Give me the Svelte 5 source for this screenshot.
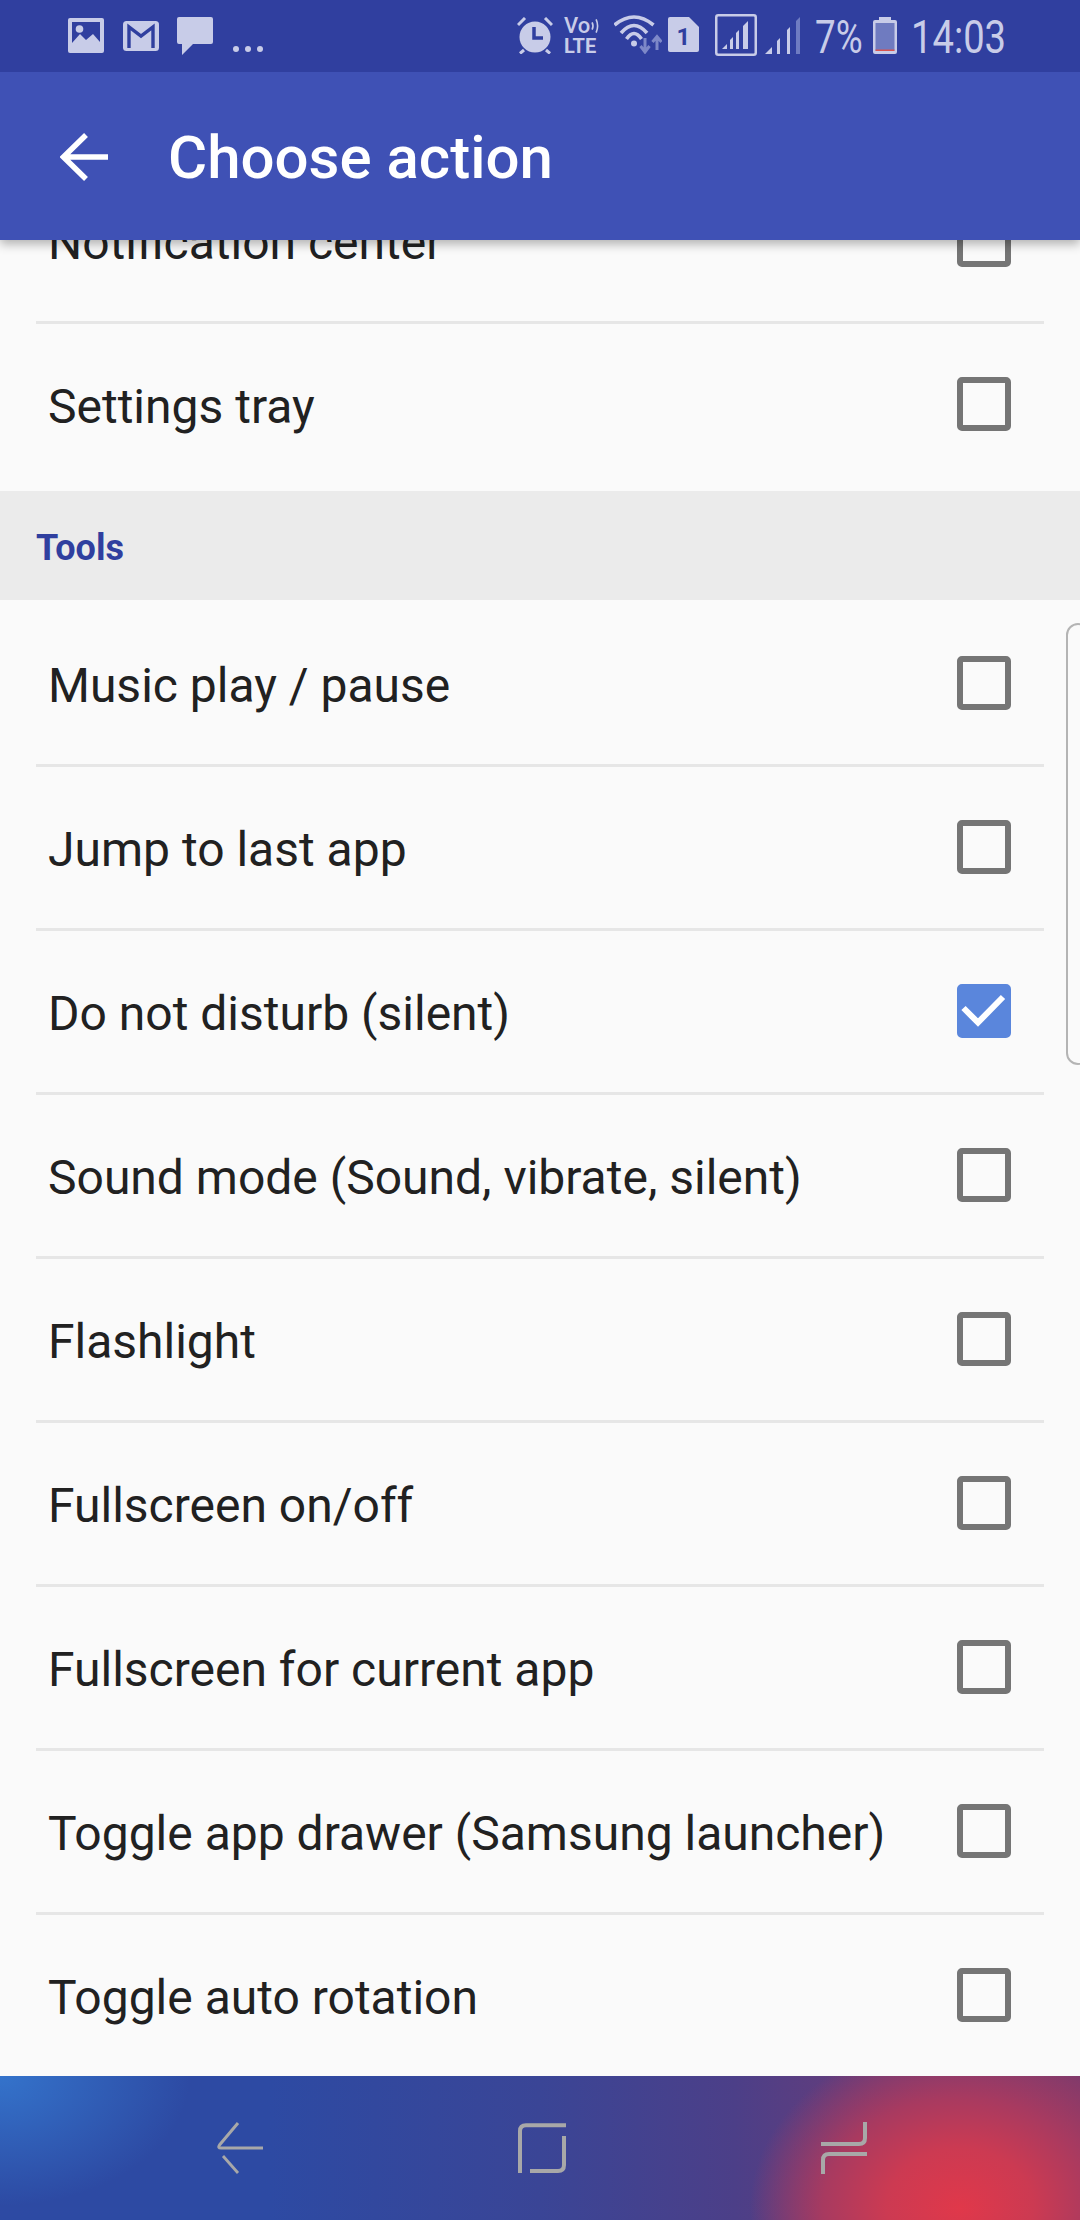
<script>
    const firstGroup = ["Notification center", "Settings tray"];
    const tools = [
        { label: "Music play / pause" },
        { label: "Jump to last app" },
        { label: "Do not disturb (silent)", checked: true },
        { label: "Sound mode (Sound, vibrate, silent)" },
        { label: "Flashlight" },
        { label: "Fullscreen on/off" },
        { label: "Fullscreen for current app" },
        { label: "Toggle app drawer (Samsung launcher)" },
        { label: "Toggle auto rotation" }
    ];
</script>

{#snippet row(label, checked)}
    <div class="row">
        <span class="row-label">{label}</span>
        <span class="check" class:checked>
            {#if checked}
                <svg viewBox="0 0 54 54" width="54" height="54" fill="none" stroke="#fff" stroke-width="6">
                    <path d="M6.5 24 L21 38.5 L46 13" />
                </svg>
            {/if}
        </span>
    </div>
{/snippet}

<div class="screen">
    <!-- STATUS BAR -->
    <div class="status">
        <div class="status-left">
            <svg class="ic-image" viewBox="0 0 36 35" width="36" height="35">
                <rect width="36" height="35" rx="2" fill="#c8cce8" />
                <path d="M4 4 H32 V24 L25 16 L18 22 L12 16 L4 25Z" fill="#303f9f" />
                <circle cx="11.5" cy="11" r="3.8" fill="#c8cce8" />
            </svg>
            <svg class="ic-mail" viewBox="0 0 36 30" width="36" height="30">
                <rect width="36" height="30" rx="3.5" fill="#c8cce8" />
                <path d="M6 27 V6 L18 15 L30 6 V27" fill="none" stroke="#303f9f" stroke-width="3.4" />
            </svg>
            <svg class="ic-chat" viewBox="0 0 36 38" width="36" height="38">
                <path d="M2 0 H34 Q36 0 36 2 V25 Q36 27 34 27 H16 L5 38 V27 H2 Q0 27 0 25 V2 Q0 0 2 0Z" fill="#c8cce8" />
            </svg>
            <span class="dots"><i></i><i></i><i></i></span>
        </div>

        <div class="status-right">
            <svg class="ic-alarm" viewBox="0 0 36 37" width="36" height="37" fill="#c8cce8">
                <circle cx="18" cy="20" r="15.5" />
                <path d="M1 8 L8 1 M35 8 L28 1 M7 33 L3 36.5 M29 33 L33 36.5" stroke="#c8cce8" stroke-width="3" />
                <path d="M17 10 V21 H26" fill="none" stroke="#303f9f" stroke-width="3.5" />
            </svg>
            <span class="volte">
                <span class="vo">Vo<svg viewBox="0 0 12 20" width="11" height="18" fill="none" stroke="#c8cce8" stroke-width="2.2"><path d="M1.5 5 Q4 10 1.5 15 M7 1 Q11 10 7 19" /></svg></span>
                <span class="lte">LTE</span>
            </span>
            <svg class="ic-wifi" viewBox="0 -2 48 39" width="48" height="39">
                <g fill="none" stroke="#c8cce8" stroke-width="3.6">
                    <path d="M0.5 8 Q20 -8 39.5 8" />
                    <path d="M7 16 Q20 1 33 16" />
                    <path d="M12.5 22 Q20 11 27.5 22" />
                </g>
                <circle cx="20" cy="26.5" r="3" fill="#c8cce8" />
                <path d="M31 21 V34 M26.5 29 L31 35 L35.5 29" fill="none" stroke="#7d88c8" stroke-width="3" />
                <path d="M43 33 V20 M38.5 25 L43 19.5 L47.5 25" fill="none" stroke="#7d88c8" stroke-width="3" />
            </svg>
            <svg class="ic-sim" viewBox="0 0 31 35" width="31" height="35">
                <path d="M2 0 H21 L31 10 V33 Q31 35 29 35 H2 Q0 35 0 33 V2 Q0 0 2 0Z" fill="#c8cce8" />
                <text x="15.5" y="28" class="sim-num">1</text>
            </svg>
            <svg class="ic-box" viewBox="0 0 42 42" width="42" height="42">
                <rect x="1.25" y="1.25" width="39.5" height="39.5" rx="2" fill="none" stroke="#c8cce8" stroke-width="2.5" />
                <g fill="#c8cce8">
                    <path d="M7 35 L12 30 V35Z" />
                    <path d="M15 35 V26 L18 23 V35Z" />
                    <path d="M21 35 V19 L24 16 V35Z" />
                    <path d="M28 35 V12 L33 7 V35Z" />
                </g>
            </svg>
            <svg class="ic-signal" viewBox="0 0 35 37" width="35" height="37">
                <g fill="#c8cce8">
                    <path d="M0 37 L7 30 V37Z" />
                    <path d="M12 37 V24 L15 21 V37Z" />
                    <path d="M22 37 V13 L25 10 V37Z" />
                </g>
                <path d="M31 37 V4 L35 0 V37Z" fill="#6f7cc2" />
            </svg>
            <span class="pct">7%</span>
            <svg class="ic-batt" viewBox="0 0 24 37" width="24" height="37">
                <path d="M6 0 H18 V3 H22 Q24 3 24 5 V35 Q24 37 22 37 H2 Q0 37 0 35 V5 Q0 3 2 3 H6Z" fill="#c8cce8" />
                <rect x="2.5" y="6" width="19" height="27.5" fill="#6f7bc0" />
                <rect x="2.5" y="32.5" width="19" height="1.5" fill="#d9534f" />
            </svg>
            <span class="time">14:03</span>
        </div>
    </div>

    <!-- TOOLBAR -->
    <header class="toolbar">
        <svg class="back" viewBox="0 0 48 48" width="48" height="48" fill="none" stroke="#fff" stroke-width="5.5">
            <path d="M48 24 H4 M26 2 L3.5 24 L26 46" />
        </svg>
        <h1>Choose action</h1>
    </header>

    <!-- LIST -->
    <main class="content">
        <div class="list">
            <div class="group first">
                {#each firstGroup as label}
                    {@render row(label, false)}
                {/each}
            </div>
            <div class="section">Tools</div>
            <div class="group tools">
                {#each tools as item}
                    {@render row(item.label, item.checked)}
                {/each}
            </div>
        </div>
        <div class="edge-handle"></div>
    </main>

    <!-- NAV BAR -->
    <nav class="nav">
        <svg viewBox="0 0 46 52" width="46" height="52" fill="none" stroke="#a8a8a8">
            <path d="M21 1 L2.5 23 Q0.5 26 4 26 H46" stroke-width="3" />
            <path d="M6 34 L21 51" stroke-width="2.8" />
        </svg>
        <svg viewBox="0 0 48 50" width="48" height="50" fill="none" stroke="#a8a8a8">
            <path d="M48 2.2 H8 Q2 2.2 2 8 V50" stroke-width="4" />
            <path d="M46 13 V42 Q46 48 40 48 H12" stroke-width="4" />
        </svg>
        <svg viewBox="0 0 46 52" width="46" height="52" fill="none" stroke="#a8a8a8">
            <path d="M44 0 V16 Q44 22 38 22 H0" stroke-width="4" />
            <path d="M46 32 H8 Q2 32 2 38 V52" stroke-width="4" />
        </svg>
    </nav>
</div>

<style>
    :global(body) {
        margin: 0;
        background: #fafafa;
    }

    .screen {
        width: 1080px;
        height: 2220px;
        display: flex;
        flex-direction: column;
        overflow: hidden;
        font-family: Roboto, sans-serif;
    }

    /* STATUS BAR */
    .status {
        height: 72px;
        flex: none;
        background: #303f9f;
        display: flex;
        justify-content: space-between;
        align-items: flex-start;
        padding: 0 75px 0 68px;
        box-sizing: border-box;
        color: #c8cce8;
        position: relative;
        z-index: 3;
    }
    .status-left,
    .status-right {
        display: flex;
        align-items: flex-start;
    }
    .ic-image {
        margin-top: 18px;
    }
    .ic-mail {
        margin: 21px 0 0 19px;
    }
    .ic-chat {
        margin: 17px 0 0 18px;
    }
    .dots {
        display: flex;
        gap: 6px;
        margin: 46px 0 0 20px;
    }
    .dots i {
        width: 6px;
        height: 6px;
        border-radius: 50%;
        background: #c8cce8;
    }
    .ic-alarm {
        margin-top: 17px;
    }
    .volte {
        display: flex;
        flex-direction: column;
        width: 36px;
        margin: 15px 0 0 11px;
        line-height: 1;
    }
    .vo {
        display: flex;
        align-items: center;
        font-size: 22px;
        font-weight: 500;
        height: 21px;
        gap: 1px;
    }
    .lte {
        font-size: 20px;
        font-weight: 700;
    }
    .ic-wifi {
        margin: 15px 0 0 14px;
    }
    .ic-sim {
        margin: 17px 0 0 6px;
    }
    .sim-num {
        font-size: 24px;
        font-weight: 700;
        fill: #303f9f;
        text-anchor: middle;
    }
    .ic-box {
        margin: 14px 0 0 16px;
    }
    .ic-signal {
        margin: 17px 0 0 8px;
    }
    .pct {
        width: 47px;
        margin-left: 15px;
        font-size: 46px;
        line-height: 74px;
        white-space: nowrap;
        transform: scaleX(0.8);
        transform-origin: left;
    }
    .ic-batt {
        margin: 17px 0 0 11px;
    }
    .time {
        width: 94px;
        margin-left: 14px;
        font-size: 46px;
        line-height: 74px;
        white-space: nowrap;
        transform: scaleX(0.83);
        transform-origin: left;
    }

    /* TOOLBAR */
    .toolbar {
        height: 168px;
        flex: none;
        background: #3f51b5;
        display: flex;
        align-items: center;
        padding-left: 60px;
        box-sizing: border-box;
        position: relative;
        z-index: 2;
        box-shadow: 0 4px 10px rgba(0, 0, 0, 0.3);
    }
    .toolbar .back {
        margin-top: 1px;
    }
    .toolbar h1 {
        margin: 3px 0 0 60px;
        color: #fff;
        font-size: 60px;
        font-weight: 500;
    }

    /* LIST */
    .content {
        flex: 1;
        min-height: 0;
        position: relative;
        background: #fafafa;
        overflow: hidden;
    }
    .list {
        margin-top: -80px;
    }
    .group.first {
        padding-bottom: 6px;
    }
    .group.tools {
        padding-top: 3px;
    }
    .section {
        height: 109px;
        box-sizing: border-box;
        background: #ebebeb;
        padding: 4px 0 0 36px;
        display: flex;
        align-items: center;
        color: #303f9f;
        font-size: 36px;
        font-weight: 700;
    }
    .row {
        height: 161px;
        margin: 0 36px;
        padding: 0 33px 0 12px;
        display: flex;
        justify-content: space-between;
        align-items: center;
    }
    .row + .row {
        border-top: 3px solid #e6e6e6;
    }
    .row-label {
        padding-top: 4px;
        font-size: 48px;
        color: #212121;
    }
    .check {
        width: 54px;
        height: 54px;
        box-sizing: border-box;
        border: 6px solid #757575;
        border-radius: 5px;
        position: relative;
        margin-top: -1px;
    }
    .check.checked {
        background: #5a86dc;
        border-color: #5a86dc;
    }
    .check svg {
        position: absolute;
        left: -6px;
        top: -6px;
    }
    .edge-handle {
        position: absolute;
        top: 383px;
        right: -10px;
        width: 24px;
        height: 442px;
        box-sizing: border-box;
        border: 2px solid #b4b4b4;
        border-radius: 16px;
    }

    /* NAV BAR */
    .nav {
        height: 144px;
        flex: none;
        box-sizing: border-box;
        display: flex;
        align-items: center;
        padding-left: 217px;
        gap: 255px;
        background:
            radial-gradient(ellipse 210px 170px at 960px 132px, #e0384a 0%, #cc3a52 35%, #a83a60 65%, rgba(110, 60, 120, 0) 100%),
            radial-gradient(ellipse 190px 130px at 0 0, #3473cb 0%, rgba(52, 115, 203, 0) 100%),
            linear-gradient(90deg, #2d4aa3 0%, #2d4aa3 25%, #3a4596 50%, #4c3f88 68%, #6a3c78 82%, #7c3a6c 100%);
    }
</style>
